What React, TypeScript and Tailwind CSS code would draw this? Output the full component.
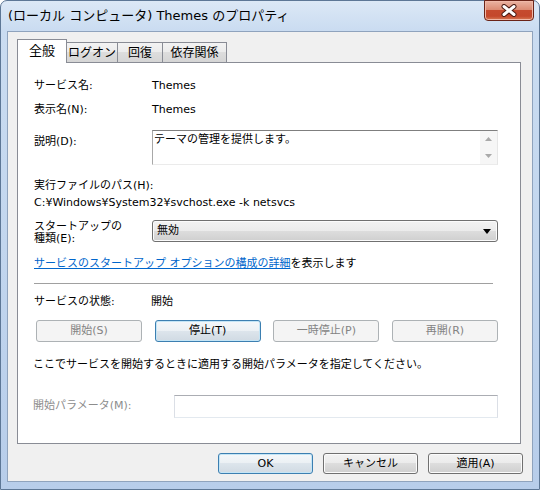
import React from "react";

// Vista-style service properties dialog
const font = "font-['DejaVu_Sans','Noto_Sans_CJK_JP',sans-serif]";

type BtnProps = {
  children: React.ReactNode;
  kind?: "normal" | "default" | "disabled";
  className?: string;
};

function Btn({ children, kind = "normal", className = "" }: BtnProps) {
  const styles = {
    normal:
      "border-[#707070] text-black bg-[linear-gradient(to_bottom,#f2f2f2_0%,#ebebeb_50%,#dddddd_50%,#cfcfcf_100%)] shadow-[inset_0_0_0_1px_#fbfbfb]",
    default:
      "border-[#3c7fb1] text-black bg-[linear-gradient(to_bottom,#f4f7fa_0%,#ebf0f4_50%,#dde5ec_50%,#d0dae3_100%)] shadow-[inset_0_0_0_1px_#c4e5f6]",
    disabled: "border-[#adb2b5] text-[#838383] bg-[#f4f4f4]",
  }[kind];
  return (
    <div
      className={`flex items-center justify-center rounded-[3px] border leading-[14px] ${styles} ${className}`}
    >
      {children}
    </div>
  );
}

type TabProps = {
  label: string;
  width: string;
  active?: boolean;
};

function Tab({ label, width, active }: TabProps) {
  if (active) {
    return (
      <div
        className={`${width} h-[24px] bg-white border border-b-0 border-[#898c95] flex items-center justify-center pb-[1px] text-[13px] relative z-10`}
      >
        {label}
      </div>
    );
  }
  return (
    <div
      className={`${width} h-[21px] -ml-px border border-[#898c95] bg-[linear-gradient(to_bottom,#f3f3f3,#ebebeb_50%,#dddddd_50%,#d5d5d5)] flex items-center justify-center text-[12px] leading-[14px]`}
    >
      {label}
    </div>
  );
}

export default function App() {
  return (
    <div className={`w-[540px] h-[490px] ${font} text-[11px] text-black`}>
      <div className="w-full h-full flex flex-col rounded-t-[7px] border border-[#5d7796] bg-[linear-gradient(to_bottom,#dce8f6_0%,#cadcf1_6%,#c2d6ee_50%,#b7cdea_100%)]">
        {/* Title bar */}
        <div className="h-[30px] flex items-start justify-between">
          <span className="pl-[7px] pt-[7px] text-[13px] leading-[16px] text-black">
            (ローカル コンピュータ) Themes のプロパティ
          </span>
          <div className="mr-[5px] -mt-px w-[50px] h-[21px] rounded-b-[4px] border border-[#6a2418] bg-[linear-gradient(to_bottom,#eab3a2_0%,#dc8c74_45%,#c54a2e_50%,#c4482c_80%,#d77a55_100%)] shadow-[inset_0_0_0_1px_#f0b8a8] flex items-center justify-center">
            <svg width="18" height="13" viewBox="0 0 18 13">
              <path
                d="M4 2.5 L14 10.5 M14 2.5 L4 10.5"
                stroke="#4a1a12"
                strokeWidth="5"
                strokeLinecap="round"
              />
              <path
                d="M4 2.5 L14 10.5 M14 2.5 L4 10.5"
                stroke="#ffffff"
                strokeWidth="3"
                strokeLinecap="round"
              />
            </svg>
          </div>
        </div>

        {/* Client area */}
        <div className="mx-[6px] mb-[7px] flex-1 bg-[#f0f0f0] border border-[#8fa3bd] flex flex-col pt-[7px] pl-[9px] pr-[11px]">
          {/* Tabs */}
          <div className="h-[24px] flex items-end -mb-px relative z-10">
            <Tab label="全般" width="w-[50px]" active />
            <Tab label="ログオン" width="w-[52px]" />
            <Tab label="回復" width="w-[46px]" />
            <Tab label="依存関係" width="w-[65px]" />
          </div>

          {/* Panel */}
          <div className="h-[382px] bg-white border border-[#898c95] pl-[16px] pr-[22px] pt-[11px] flex flex-col">
            <div className="h-[24px] flex items-center">
              <span className="w-[118px]">サービス名:</span>
              <span>Themes</span>
            </div>
            <div className="h-[24px] flex items-center">
              <span className="w-[118px]">表示名(N):</span>
              <span>Themes</span>
            </div>

            <div className="mt-[8px] flex">
              <span className="w-[118px] pt-[6px] leading-[12px]">説明(D):</span>
              <div className="flex-1 h-[35px] flex border border-t-[#7f7f7f] border-l-[#a8a8a8] border-r-[#e6e6e6] border-b-[#ebebeb]">
                <div className="flex-1 pl-[1px] pt-[2px] leading-[13px]">
                  テーマの管理を提供します。
                </div>
                <div className="w-[17px] bg-[#f6f6f6] flex flex-col items-center justify-between py-[6px]">
                  <svg width="7" height="4" viewBox="0 0 7 4">
                    <path d="M0 4 L3.5 0 L7 4 Z" fill="#a9a9a9" />
                  </svg>
                  <svg width="7" height="4" viewBox="0 0 7 4">
                    <path d="M0 0 L7 0 L3.5 4 Z" fill="#a9a9a9" />
                  </svg>
                </div>
              </div>
            </div>

            <div className="mt-[14px] leading-[14px]">実行ファイルのパス(H):</div>
            <div className="mt-[3px] leading-[14px]">
              C:¥Windows¥System32¥svchost.exe -k netsvcs
            </div>

            <div className="mt-[10px] flex">
              <span className="w-[118px] pt-[1px] leading-[12px]">
                スタートアップの
                <br />
                種類(E):
              </span>
              <div className="flex-1 h-[22px] rounded-[3px] border border-[#707070] bg-[linear-gradient(to_bottom,#f2f2f2_0%,#ebebeb_50%,#dddddd_50%,#cfcfcf_100%)] shadow-[inset_0_0_0_1px_#fbfbfb] flex items-center justify-between pl-[4px] pr-[6px]">
                <span className="leading-[14px]">無効</span>
                <svg width="8" height="5" viewBox="0 0 8 5">
                  <path d="M0 0 L8 0 L4 5 Z" fill="#000000" />
                </svg>
              </div>
            </div>

            <div className="mt-[12px] leading-[14px]">
              <span className="text-[#0066cc] underline">
                サービスのスタートアップ オプションの構成の詳細
              </span>
              を表示します
            </div>

            <div className="mt-[12px] h-px bg-[#a0a0a0] mr-[5px]" />

            <div className="mt-[11px] leading-[14px] flex">
              <span className="w-[117px]">サービスの状態:</span>
              <span>開始</span>
            </div>

            <div className="mt-[11px] ml-[2px] flex justify-between">
              <Btn kind="disabled" className="w-[106px] h-[22px]">
                開始(S)
              </Btn>
              <Btn kind="default" className="w-[106px] h-[22px]">
                停止(T)
              </Btn>
              <Btn kind="disabled" className="w-[106px] h-[22px]">
                一時停止(P)
              </Btn>
              <Btn kind="disabled" className="w-[106px] h-[22px]">
                再開(R)
              </Btn>
            </div>

            <div className="mt-[16px] leading-[14px] -ml-px">
              ここでサービスを開始するときに適用する開始パラメータを指定してください。
            </div>

            <div className="mt-[23px] h-[23px] flex items-center">
              <span className="w-[141px] text-[#8d8d8d] -ml-px">開始パラメータ(M):</span>
              <div className="flex-1 h-[23px] bg-white border border-t-[#abadb3] border-l-[#dbdfe6] border-r-[#dbdfe6] border-b-[#e3e9ef]" />
            </div>
          </div>

          {/* Dialog buttons */}
          <div className="mt-[9px] -mr-[2px] flex justify-end gap-[10px]">
            <Btn kind="default" className="w-[95px] h-[21px]">
              OK
            </Btn>
            <Btn className="w-[95px] h-[21px]">キャンセル</Btn>
            <Btn className="w-[95px] h-[21px]">適用(A)</Btn>
          </div>
        </div>
      </div>
    </div>
  );
}
